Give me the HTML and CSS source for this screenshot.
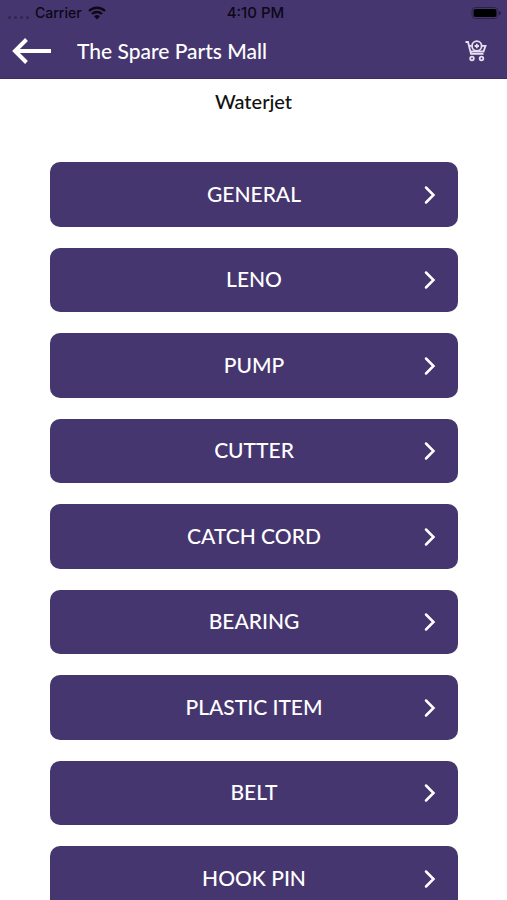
FILE: index.html
```html
<!DOCTYPE html>
<html lang="en">
<head>
<meta charset="utf-8">
<meta name="viewport" content="width=device-width, initial-scale=1">
<title>The Spare Parts Mall</title>
<link rel="stylesheet" href="styles.css">
</head>
<body>
<svg class="defs" aria-hidden="true">
  <symbol id="chevron" viewBox="0 0 12 20"><path d="M2 2.500l7.500 7.500L2 17.500"/></symbol>
</svg>
<header class="top">
  <div class="status">
    <div class="carrier">
      <span class="signal"><i></i><i></i><i></i><i></i></span>
      <span>Carrier</span>
      <svg class="wifi" width="18" height="14" viewBox="0 0 18 14" aria-hidden="true">
        <path d="M1 5a11.500 11.500 0 0 1 16 0M4 8a7.200 7.200 0 0 1 10 0"/>
        <path class="dot" d="M6 10.300a4.400 4.400 0 0 1 6 0L9 13.500z"/>
      </svg>
    </div>
    <span class="time">4:10 PM</span>
    <svg class="battery" width="32" height="14" viewBox="0 0 32 14" aria-hidden="true">
      <rect class="shell" x="1" y="1.500" width="26" height="11" rx="3.500"/>
      <rect x="2.500" y="3" width="23" height="8" rx="2"/>
      <path d="M28.500 5q2 2 0 4z"/>
    </svg>
  </div>
  <nav class="bar">
    <button class="icon" type="button" aria-label="Back">
      <svg width="40" height="26" viewBox="0 0 40 26" class="back"><path d="M39 13H3M14.500 1.500L3 13l11.500 11.500"/></svg>
    </button>
    <h1>The Spare Parts Mall</h1>
    <button class="icon" type="button" aria-label="Cart">
      <svg width="22" height="22" viewBox="0 0 22 22" class="cart">
        <path d="M0.500 2h2.500l3 11.800h12.500M4 5.800h2.500M17 5.800h3.500l-2 5.700H6"/>
        <circle cx="11.800" cy="6" r="4.800"/><path d="M11.800 3.800v4.400M9.600 6h4.400"/>
        <circle cx="7" cy="18.500" r="1.800"/><circle cx="16.500" cy="18.500" r="1.800"/>
      </svg>
    </button>
  </nav>
</header>
<main>
  <h2>Waterjet</h2>
  <ul class="list">
    <li><button type="button"><span>GENERAL</span><svg><use href="#chevron"/></svg></button></li>
    <li><button type="button"><span>LENO</span><svg><use href="#chevron"/></svg></button></li>
    <li><button type="button"><span>PUMP</span><svg><use href="#chevron"/></svg></button></li>
    <li><button type="button"><span>CUTTER</span><svg><use href="#chevron"/></svg></button></li>
    <li><button type="button"><span>CATCH CORD</span><svg><use href="#chevron"/></svg></button></li>
    <li><button type="button"><span>BEARING</span><svg><use href="#chevron"/></svg></button></li>
    <li><button type="button"><span>PLASTIC ITEM</span><svg><use href="#chevron"/></svg></button></li>
    <li><button type="button"><span>BELT</span><svg><use href="#chevron"/></svg></button></li>
    <li><button type="button"><span>HOOK PIN</span><svg><use href="#chevron"/></svg></button></li>
  </ul>
</main>
</body>
</html>
```
FILE: styles.css
```css
* { box-sizing: border-box; }
body {
  margin: 0;
  background: #fff;
  color: #111;
  font-family: Lato, "Open Sans", sans-serif;
}
.defs { display: none; }
svg { fill: none; flex: none; }
button {
  border: 0;
  padding: 0;
  color: #fff;
  font: inherit;
  cursor: pointer;
}
.top {
  background: #46366f;
  border-bottom: 1px solid #3b2c63;
}
.status {
  display: grid;
  grid-template-columns: 1fr auto 1fr;
  align-items: center;
  height: 26px;
  padding: 0 4px 0 8px;
  color: #0c0816;
  font: 500 14px/26px Inter, sans-serif;
}
.time { font-size: 15px; }
.carrier { display: flex; align-items: center; gap: 6px; }
.signal { display: flex; gap: 3px; padding-top: 8px; }
.signal i { width: 3px; height: 3px; border-radius: 50%; background: #33264f; }
.wifi { stroke: #0c0816; stroke-width: 2.4; }
.wifi .dot { fill: #0c0816; stroke: none; }
.battery { justify-self: end; fill: #000; }
.battery .shell { fill: none; stroke: #2d2148; }
.bar {
  display: flex;
  align-items: center;
  height: 52px;
  padding: 0 20px 2px 12px;
}
.icon { display: flex; background: none; }
.back { stroke: #fff; stroke-width: 4; }
.cart { stroke: #e6e0f2; stroke-width: 1.8; }
h1 {
  flex: 1;
  margin: 0 0 0 25px;
  color: #fff;
  font-size: 21px;
  font-weight: 500;
  line-height: 28px;
}
h2 {
  margin: 0;
  padding: 8px 0 0;
  text-align: center;
  font-size: 20px;
  font-weight: 500;
  line-height: 28px;
}
.list {
  display: grid;
  gap: 21px;
  margin: 0;
  padding: 47px 49px 21px 50px;
  list-style: none;
}
.list button {
  display: grid;
  grid-template-columns: 1fr auto 1fr;
  align-items: center;
  width: 100%;
  height: 65px;
  padding: 0 22px;
  border-radius: 10px;
  background: #46366f;
  font-size: 21px;
  font-weight: 500;
  line-height: 28px;
}
.list li:nth-child(even) button { height: 64px; }
.list span { grid-column: 2; padding-bottom: 2px; }
.list svg {
  justify-self: end;
  width: 12px;
  height: 20px;
  stroke: #fff;
  stroke-width: 2.5;
  stroke-linecap: round;
}
```
